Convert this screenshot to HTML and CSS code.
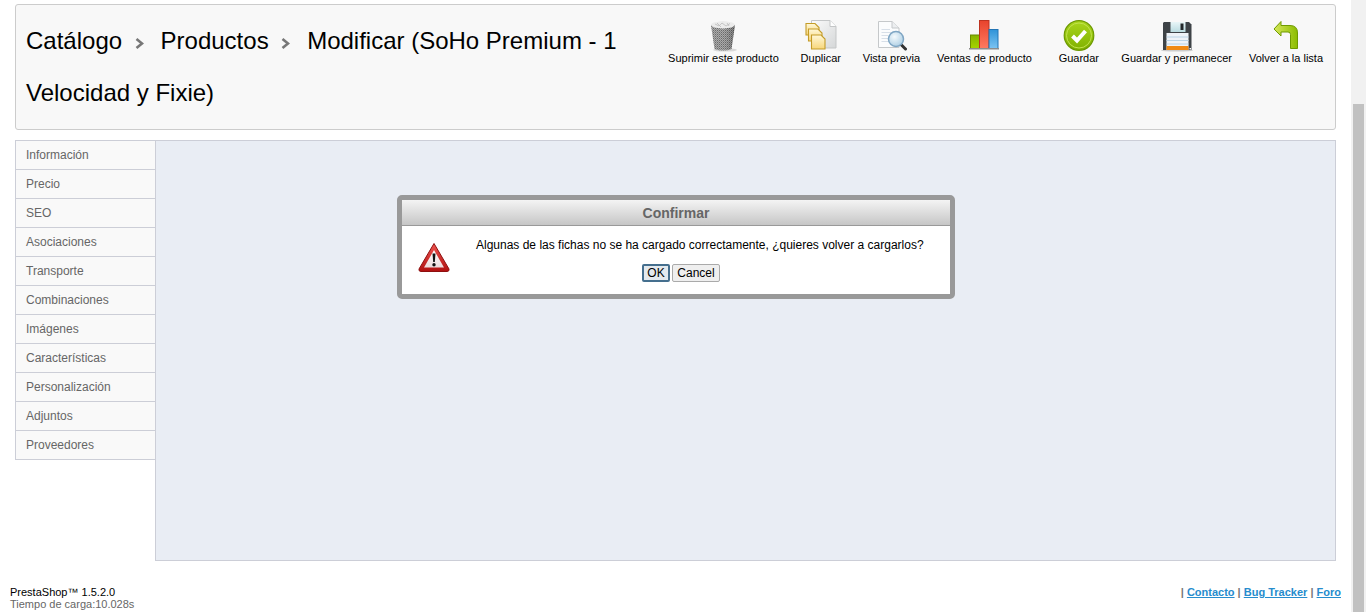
FILE: index.html
```html
<!DOCTYPE html>
<html lang="es">
<head>
<meta charset="utf-8">
<title>Modificar producto</title>
<link rel="stylesheet" href="styles.css">
</head>
<body>
<svg class="defs" width="0" height="0" aria-hidden="true">
  <defs>
    <pattern id="mesh" width="2" height="2" patternUnits="userSpaceOnUse">
      <rect width="2" height="2" fill="#a2a2a2"/>
      <rect width="1" height="1" fill="#5a5a5a"/>
      <rect x="1" y="1" width="1" height="1" fill="#7a7a7a"/>
    </pattern>
    <linearGradient id="trashShade" x1="0" x2="1" y1="0" y2="0">
      <stop offset="0" stop-color="#fff" stop-opacity=".12"/>
      <stop offset=".5" stop-color="#fff" stop-opacity=".1"/>
      <stop offset="1" stop-color="#000" stop-opacity=".22"/>
    </linearGradient>
    <linearGradient id="yellowPage" x1="0" x2="0" y1="0" y2="1">
      <stop offset="0" stop-color="#fff8d8"/>
      <stop offset="1" stop-color="#f7d67a"/>
    </linearGradient>
    <linearGradient id="greyPage" x1="0" x2="1" y1="0" y2="1">
      <stop offset="0" stop-color="#fbfbfb"/>
      <stop offset="1" stop-color="#d5d7d8"/>
    </linearGradient>
    <radialGradient id="lens" cx=".4" cy=".35" r=".8">
      <stop offset="0" stop-color="#f4fafd"/>
      <stop offset="1" stop-color="#a3c8e0"/>
    </radialGradient>
    <linearGradient id="barRed" x1="0" x2="0" y1="0" y2="1">
      <stop offset="0" stop-color="#e8432c"/>
      <stop offset="1" stop-color="#ff7a60"/>
    </linearGradient>
    <linearGradient id="barBlue" x1="0" x2="0" y1="0" y2="1">
      <stop offset="0" stop-color="#2f93d8"/>
      <stop offset="1" stop-color="#7cc4f2"/>
    </linearGradient>
    <linearGradient id="barGreen" x1="0" x2="0" y1="0" y2="1">
      <stop offset="0" stop-color="#86b400"/>
      <stop offset="1" stop-color="#a6d400"/>
    </linearGradient>
    <linearGradient id="okGreen" x1="0" x2="0" y1="0" y2="1">
      <stop offset="0" stop-color="#a9d61c"/>
      <stop offset="1" stop-color="#7fb000"/>
    </linearGradient>
    <linearGradient id="labelFill" x1="0" x2="0" y1="0" y2="1">
      <stop offset="0" stop-color="#e9f6f8"/>
      <stop offset="1" stop-color="#b9dbe0"/>
    </linearGradient>
    <linearGradient id="arrowGreen" x1="0" x2="1" y1="0" y2="0">
      <stop offset="0" stop-color="#d6e85a"/>
      <stop offset="1" stop-color="#8cbc00"/>
    </linearGradient>
    <linearGradient id="warnRed" x1="0" x2="0" y1="0" y2="1">
      <stop offset="0" stop-color="#f05550"/>
      <stop offset="1" stop-color="#b01010"/>
    </linearGradient>
    <linearGradient id="warnWhite" x1="0" x2="0" y1="0" y2="1">
      <stop offset="0" stop-color="#fff"/>
      <stop offset="1" stop-color="#ecdcdc"/>
    </linearGradient>
  </defs>
</svg>
<div class="page">
  <header class="head">
    <h1 class="title">
      <span>Catálogo</span><svg class="crumb" viewBox="0 0 9 11"><path d="M1.5 1 L7 5.5 L1.5 10" fill="none" stroke="#777" stroke-width="2.6"/></svg><span>Productos</span><svg class="crumb" viewBox="0 0 9 11"><path d="M1.5 1 L7 5.5 L1.5 10" fill="none" stroke="#777" stroke-width="2.6"/></svg><span>Modificar (SoHo Premium - 1</span> <span>Velocidad y Fixie)</span>
    </h1>
    <nav class="tools">
      <a class="tool">
        <svg class="ico" viewBox="0 0 32 32">
          <ellipse cx="18" cy="30" rx="12" ry="1.6" fill="#d8d8d8"/>
          <path d="M4 5 L28 5 L24.5 29 Q16 32 7.5 29 Z" fill="url(#mesh)"/>
          <path d="M4 5 L28 5 L24.5 29 Q16 32 7.5 29 Z" fill="url(#trashShade)"/>
          <path d="M4 5 Q5 2 10 2 Q16 0 22 2 Q27 2 28 5 Q27 8 16 8.500 Q5 8 4 5 Z" fill="#ececec"/>
          <path d="M8 4 L12 6 L15 3 L19 6 L23 3.500 M10 3 L14 7 M20 3 L22 6" stroke="#bbb" stroke-width=".8" fill="none"/>
        </svg>
        <span>Suprimir este producto</span>
      </a>
      <a class="tool narrow dup">
        <svg class="ico" viewBox="0 0 32 32">
          <path d="M6.500 0.500 L25 0.500 L31 6.500 L31 28 L6.500 28 Z" fill="url(#greyPage)" stroke="#c4c6c7"/>
          <path d="M25 0.500 L25 6.500 L31 6.500" fill="#fff" stroke="#c4c6c7"/>
          <g fill="url(#yellowPage)" stroke="#c49c28" stroke-width="1.100">
            <path d="M1 3.500 L10 3.500 L14 7.500 L14 15 L1 15 Z"/>
            <path d="M3.500 9 L13 9 L17 13 L17 21 L3.500 21 Z"/>
            <path d="M6.500 15 L16 15 L20 19 L20 29 L6.500 29 Z"/>
          </g>
        </svg>
        <span>Duplicar</span>
      </a>
      <a class="tool">
        <svg class="ico" viewBox="0 0 32 32">
          <path d="M3.500 1.500 L17 1.500 L24 8 L24 27.500 L3.500 27.500 Z" fill="#fbfcfd" stroke="#c5c8ca"/>
          <path d="M17 1.500 L17 8 L24 8" fill="#eceef0" stroke="#c5c8ca"/>
          <path d="M6.500 9.500 H15 M6.500 12.500 H19 M6.500 15.500 H13 M6.500 18.500 H13 M6.500 21.500 H14" stroke="#d7dfe8"/>
          <path d="M26 24.500 L30.500 29" stroke="#333" stroke-width="3" stroke-linecap="round"/>
          <circle cx="21" cy="19" r="7.500" fill="url(#lens)" stroke="#7fa6c4" stroke-width="1.500"/>
        </svg>
        <span>Vista previa</span>
      </a>
      <a class="tool sales">
        <svg class="ico" viewBox="0 0 32 32">
          <rect x="2.500" y="15" width="9" height="13.500" fill="url(#barGreen)" stroke="#6b8c00"/>
          <rect x="11.500" y="0.500" width="9.500" height="28" fill="url(#barRed)" stroke="#bd3320"/>
          <rect x="21" y="9.500" width="9" height="19" fill="url(#barBlue)" stroke="#2375b5"/>
          <rect x="1" y="28" width="30" height="1.500" fill="#8c8c8c"/>
        </svg>
        <span>Ventas de producto</span>
      </a>
      <a class="tool narrow save">
        <svg class="ico" viewBox="0 0 32 32">
          <circle cx="16" cy="15.500" r="14.800" fill="url(#okGreen)" stroke="#6d9900" stroke-width="1.200"/>
          <circle cx="16" cy="15.500" r="12.500" fill="none" stroke="#c2e24e" stroke-width="1"/>
          <path d="M9.500 16 L14 20.500 L22.500 11" fill="none" stroke="#fff" stroke-width="4"/>
        </svg>
        <span>Guardar</span>
      </a>
      <a class="tool gyp">
        <svg class="ico" viewBox="0 0 32 32">
          <ellipse cx="16" cy="30.500" rx="16" ry="1" fill="#ccc"/>
          <path d="M3 2 H28 L30.500 4.500 V30 H2 V3 Z" fill="#3e4347"/>
          <rect x="9.500" y="2" width="15" height="10" fill="url(#labelFill)"/>
          <rect x="19.500" y="3.500" width="3" height="6.500" fill="#23282b"/>
          <rect x="5.500" y="13" width="22" height="17" fill="#eef3f8"/>
          <path d="M5.500 17 H27.500 M5.500 20.500 H27.500 M5.500 24 H27.500" stroke="#b9d3e6"/>
          <rect x="5.500" y="26" width="22" height="4" fill="#f08a14"/>
          <rect x="28.500" y="28" width="1.500" height="1.500" fill="#fff"/>
        </svg>
        <span>Guardar y permanecer</span>
      </a>
      <a class="tool">
        <svg class="ico" viewBox="0 0 32 32">
          <path d="M4 9 L11 1.500 L11 5.500 L20 5.500 Q27.500 5.500 27.500 13 L27.500 28.500 L20.500 28.500 L20.500 14.500 Q20.500 12 18 12 L11 12 L11 16 Z" fill="url(#arrowGreen)" stroke="#6f9a00" stroke-linejoin="round"/>
        </svg>
        <span>Volver a la lista</span>
      </a>
    </nav>
  </header>

  <div class="work">
    <ul class="tabs">
      <li>Información</li>
      <li>Precio</li>
      <li>SEO</li>
      <li>Asociaciones</li>
      <li>Transporte</li>
      <li>Combinaciones</li>
      <li>Imágenes</li>
      <li>Características</li>
      <li>Personalización</li>
      <li>Adjuntos</li>
      <li>Proveedores</li>
    </ul>
    <main class="panel">
      <div class="dialog">
        <div class="dialog-title">Confirmar</div>
        <div class="dialog-body">
          <svg class="warn" viewBox="0 0 32 32">
            <path d="M16 1.500 L31 27 Q31.500 29.500 29 29.500 L3 29.500 Q0.500 29.500 1 27 Z" fill="url(#warnRed)" stroke="#8e0f0f" stroke-linejoin="round"/>
            <path d="M16 8 L26 25.500 L6 25.500 Z" fill="url(#warnWhite)"/>
            <path d="M14.500 11.500 H17.500 L16.800 20 H15.200 Z" fill="#111"/>
            <circle cx="16" cy="22.700" r="1.700" fill="#111"/>
          </svg>
          <div class="dialog-main">
            <p class="dialog-msg">Algunas de las fichas no se ha cargado correctamente, ¿quieres volver a cargarlos?</p>
            <div class="dialog-actions">
              <button class="btn btn-ok" type="button">OK</button>
              <button class="btn" type="button">Cancel</button>
            </div>
          </div>
        </div>
      </div>
    </main>
  </div>

  <footer class="foot">
    <div class="foot-left">
      <div class="ver">PrestaShop™ 1.5.2.0</div>
      <div class="load">Tiempo de carga:10.028s</div>
    </div>
    <div class="foot-links">| <a>Contacto</a> | <a>Bug Tracker</a> | <a>Foro</a></div>
  </footer>
</div>
<div class="scrollbar"><div class="thumb"></div></div>
</body>
</html>
```

FILE: styles.css
```css
* { box-sizing: border-box; }
html, body { margin: 0; padding: 0; }
body {
  display: flex;
  height: 612px;
  overflow: hidden;
  background: #fff;
  font-family: "Liberation Sans", Arial, sans-serif;
  color: #000;
}
.defs { position: absolute; }
.page { width: 1351px; flex: none; padding-top: 4px; }
.head {
  display: flex;
  justify-content: space-between;
  margin: 0 15px;
  height: 126px;
  background: #f8f8f8;
  border: 1px solid #ccc;
  border-radius: 3px;
}
.title {
  margin: 0;
  padding: 10px 0 0 10px;
  flex: 1 1 0;
  min-width: 0;
  font-size: 24px;
  font-weight: 400;
  line-height: 52px;
}
.crumb { width: 9px; height: 11px; margin: 0 17px 0 12.5px; vertical-align: 0; }
.tools { display: flex; flex: none; padding: 15px 4px 0 0; }
.tool {
  display: flex;
  flex-direction: column;
  align-items: center;
  padding: 0 8px;
  font-size: 11px;
  line-height: 13px;
  color: #000;
}
.tool.narrow { min-width: 67px; }
.tool.dup { margin: 0 0.5px; }
.tool.sales { margin-left: 1px; }
.tool.save { margin: 0 1px 0 5.5px; }
.tool.gyp { margin-right: 1px; }
.ico { width: 32px; height: 32px; display: block; }

.work { display: flex; margin: 10px 15px 0; }
.tabs {
  flex: none;
  width: 140px;
  height: 320px;
  margin: 0;
  padding: 0;
  list-style: none;
  border-left: 1px solid #ccced7;
  border-top: 1px solid #ccced7;
}
.tabs li {
  height: 29px;
  padding-left: 10px;
  line-height: 28px;
  font-size: 12px;
  color: #666;
  background: #f9f9f9;
  border-bottom: 1px solid #ccced7;
}
.panel {
  position: relative;
  flex: 1;
  height: 421px;
  background: #e9edf4;
  border: 1px solid #ccced7;
}
.dialog {
  position: absolute;
  left: 241px;
  top: 54px;
  width: 558px;
  height: 104px;
  background: #fff;
  border: 5px solid #999;
  border-radius: 5px;
}
.dialog-title {
  height: 26px;
  padding-top: 1px;
  line-height: 25px;
  text-align: center;
  font-size: 14px;
  font-weight: 700;
  color: #666;
  background: linear-gradient(#f4f4f4, #c6c6c6);
  border-bottom: 1px solid #999;
}
.dialog-body { display: flex; padding: 16px 0 0 16px; }
.warn { width: 32px; height: 32px; flex: none; }
.dialog-main { margin-left: 26px; }
.dialog-msg { margin: -4px 0 0; font-size: 12px; line-height: 14px; white-space: nowrap; }
.dialog-actions { display: flex; gap: 2px; margin-top: 12px; padding-left: 166px; }
.btn {
  width: 48px;
  height: 18px;
  padding: 0 4px;
  font: 12px/16px "Liberation Sans", Arial, sans-serif;
  color: #000;
  background: #efefef;
  border: 1px solid #aaa;
  border-radius: 2px;
}
.btn-ok { width: 28px; background: #e3e9ee; border: 2px solid #456f8e; padding: 0; line-height: 14px; }

.foot {
  display: flex;
  justify-content: space-between;
  padding: 0 10px;
  margin-top: 25px;
  font-size: 11px;
  line-height: 12px;
}
.load { color: #666; }
.foot-links { color: #777; font-weight: 700; }
.foot-links a { color: #268ccd; text-decoration: underline; }

.scrollbar { flex: none; width: 15px; padding: 104px 2px 0; background: #f1f1f1; }
.thumb { height: 100%; background: #c1c1c1; }
```
